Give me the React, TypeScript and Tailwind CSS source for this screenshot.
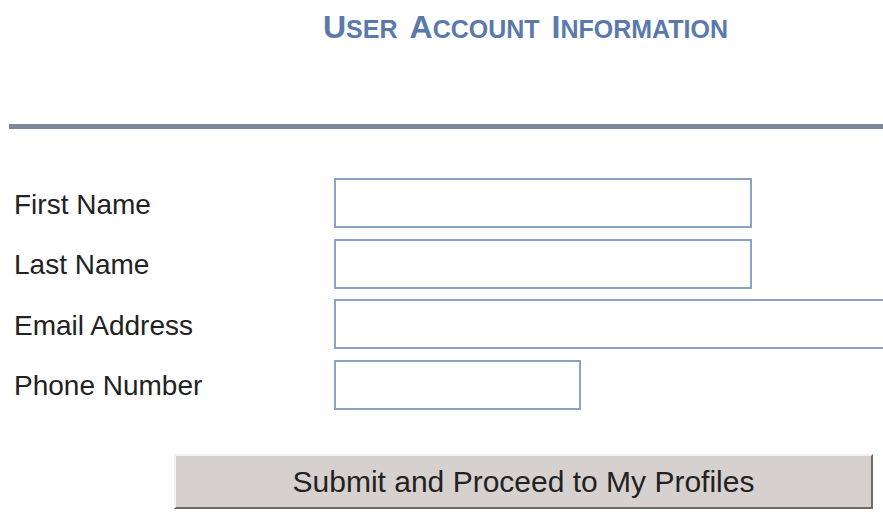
import React from "react";

const fields = [
  { label: "First Name", width: "w-[418px]" },
  { label: "Last Name", width: "w-[418px]" },
  { label: "Email Address", width: "w-[560px]" },
  { label: "Phone Number", width: "w-[247px]" },
];

const Cap = ({ big, rest }: { big: string; rest: string }) => (
  <span>
    <span className="text-[32px]">{big}</span>
    <span className="text-[25px]">{rest}</span>
  </span>
);

const App = () => {
  return (
    <div
      className="w-[883px] h-[514px] overflow-hidden bg-white"
      style={{ fontFamily: '"Liberation Sans", Arial, sans-serif' }}
    >
      <div className="pt-[3px] pl-[323px] h-[124px] font-bold text-[#5b7aab] flex gap-[12px] items-baseline">
        <Cap big="U" rest="SER" />
        <Cap big="A" rest="CCOUNT" />
        <Cap big="I" rest="NFORMATION" />
      </div>
      <div className="ml-[9px] h-[5px] bg-[#7b8899]" />

      <form className="mt-[49px] flex flex-col gap-[10.5px]">
        {fields.map((f) => (
          <div key={f.label} className="flex items-center">
            <label className="w-[334px] shrink-0 pl-[14px] pt-[3px] text-[28px] text-[#222]">
              {f.label}
            </label>
            <input
              type="text"
              className={`${f.width} h-[50px] shrink-0 border-2 border-[#8aa3c4] bg-white outline-none`}
            />
          </div>
        ))}

        <button
          type="button"
          className="ml-[174px] mt-[34px] w-[699px] h-[55px] bg-[#d6d1cf] text-[30px] text-[#222] border-2 border-t-[#f4f2f1] border-l-[#f4f2f1] border-r-[#6e6a68] border-b-[#6e6a68]"
        >
          Submit and Proceed to My Profiles
        </button>
      </form>
    </div>
  );
};

export default App;
